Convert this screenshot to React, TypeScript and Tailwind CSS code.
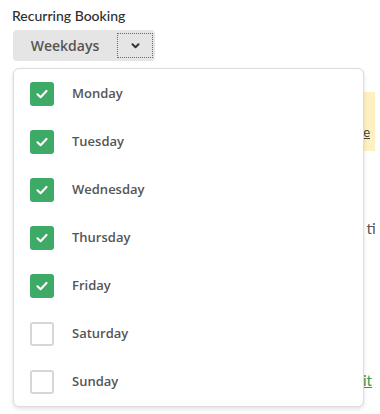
const days = [
  { name: "Monday", checked: true },
  { name: "Tuesday", checked: true },
  { name: "Wednesday", checked: true },
  { name: "Thursday", checked: true },
  { name: "Friday", checked: true },
  { name: "Saturday", checked: false },
  { name: "Sunday", checked: false },
];

const openSans = { fontFamily: "'Open Sans', 'Noto Sans', sans-serif" };

const Checkbox = ({ checked }: { checked: boolean }) =>
  checked ? (
    <span className="flex h-6 w-6 items-center justify-center rounded-[3px] bg-[#3dab65]">
      <svg width="14" height="14" viewBox="0 0 14 14" fill="none">
        <path
          d="M2.5 7.3 L5.6 10.2 L11.5 4"
          stroke="white"
          strokeWidth="2.2"
          strokeLinecap="round"
          strokeLinejoin="round"
        />
      </svg>
    </span>
  ) : (
    <span className="h-6 w-6 rounded-[3px] border-2 border-[#d6d6d6] bg-white" />
  );

export default function App() {
  return (
    <div
      className="relative h-[414px] w-[380px] overflow-hidden bg-white"
      style={{ fontFamily: "Lato, 'Open Sans', sans-serif" }}
    >
      <div className="flex w-[375px] flex-col overflow-hidden pl-3 pt-[6px]">
        <label className="text-[14px] leading-5 font-medium text-[#2e2e2e]">
          Recurring Booking
        </label>
        <div className="mt-1 flex h-[31px] w-[142px] items-center rounded bg-[#e5e5e5] pr-[2px] ml-px">
          <span className="flex-1 text-center text-[14px] font-semibold text-[#555]" style={openSans}>
            Weekdays
          </span>
          <span className="flex h-[25px] w-[36px] items-center justify-center border border-dotted border-[#6b6b6b]">
            <svg width="9" height="6" viewBox="0 0 9 6" fill="none">
              <path
                d="M1.5 1.3 L4.5 4.2 L7.5 1.3"
                stroke="#333"
                strokeWidth="2"
                strokeLinecap="round"
                strokeLinejoin="round"
              />
            </svg>
          </span>
        </div>

        {/* page content under the open menu */}
        <div className="mt-[31px] ml-auto flex h-[59px] w-[300px] flex-col items-end justify-center bg-[#fff0c2] pr-[5px] text-[13px] text-[#444]">
          <span className="leading-5">&nbsp;</span>
          <span className="leading-5 underline">See the guide</span>
        </div>
        <div className="-mr-[21px] mt-[67px] flex justify-end whitespace-nowrap text-[15px] leading-5 text-[#555]">
          same time
        </div>
        <div className="mt-[132px] flex justify-end pr-[3px] text-[15px] leading-5 text-[#2f9a58]">
          <span className="underline">Edit</span>
        </div>
      </div>

      <div className="absolute left-[13px] top-[68px] w-[351px] rounded-md border border-[#dcdcdc] bg-white pt-px shadow-[0_2px_4px_rgba(0,0,0,0.12)]">
        {days.map((d) => (
          <div key={d.name} className="flex h-12 items-center gap-[18px] pl-4">
            <Checkbox checked={d.checked} />
            <span className="text-[13px] font-semibold text-[#555]" style={openSans}>
              {d.name}
            </span>
          </div>
        ))}
      </div>
    </div>
  );
}
